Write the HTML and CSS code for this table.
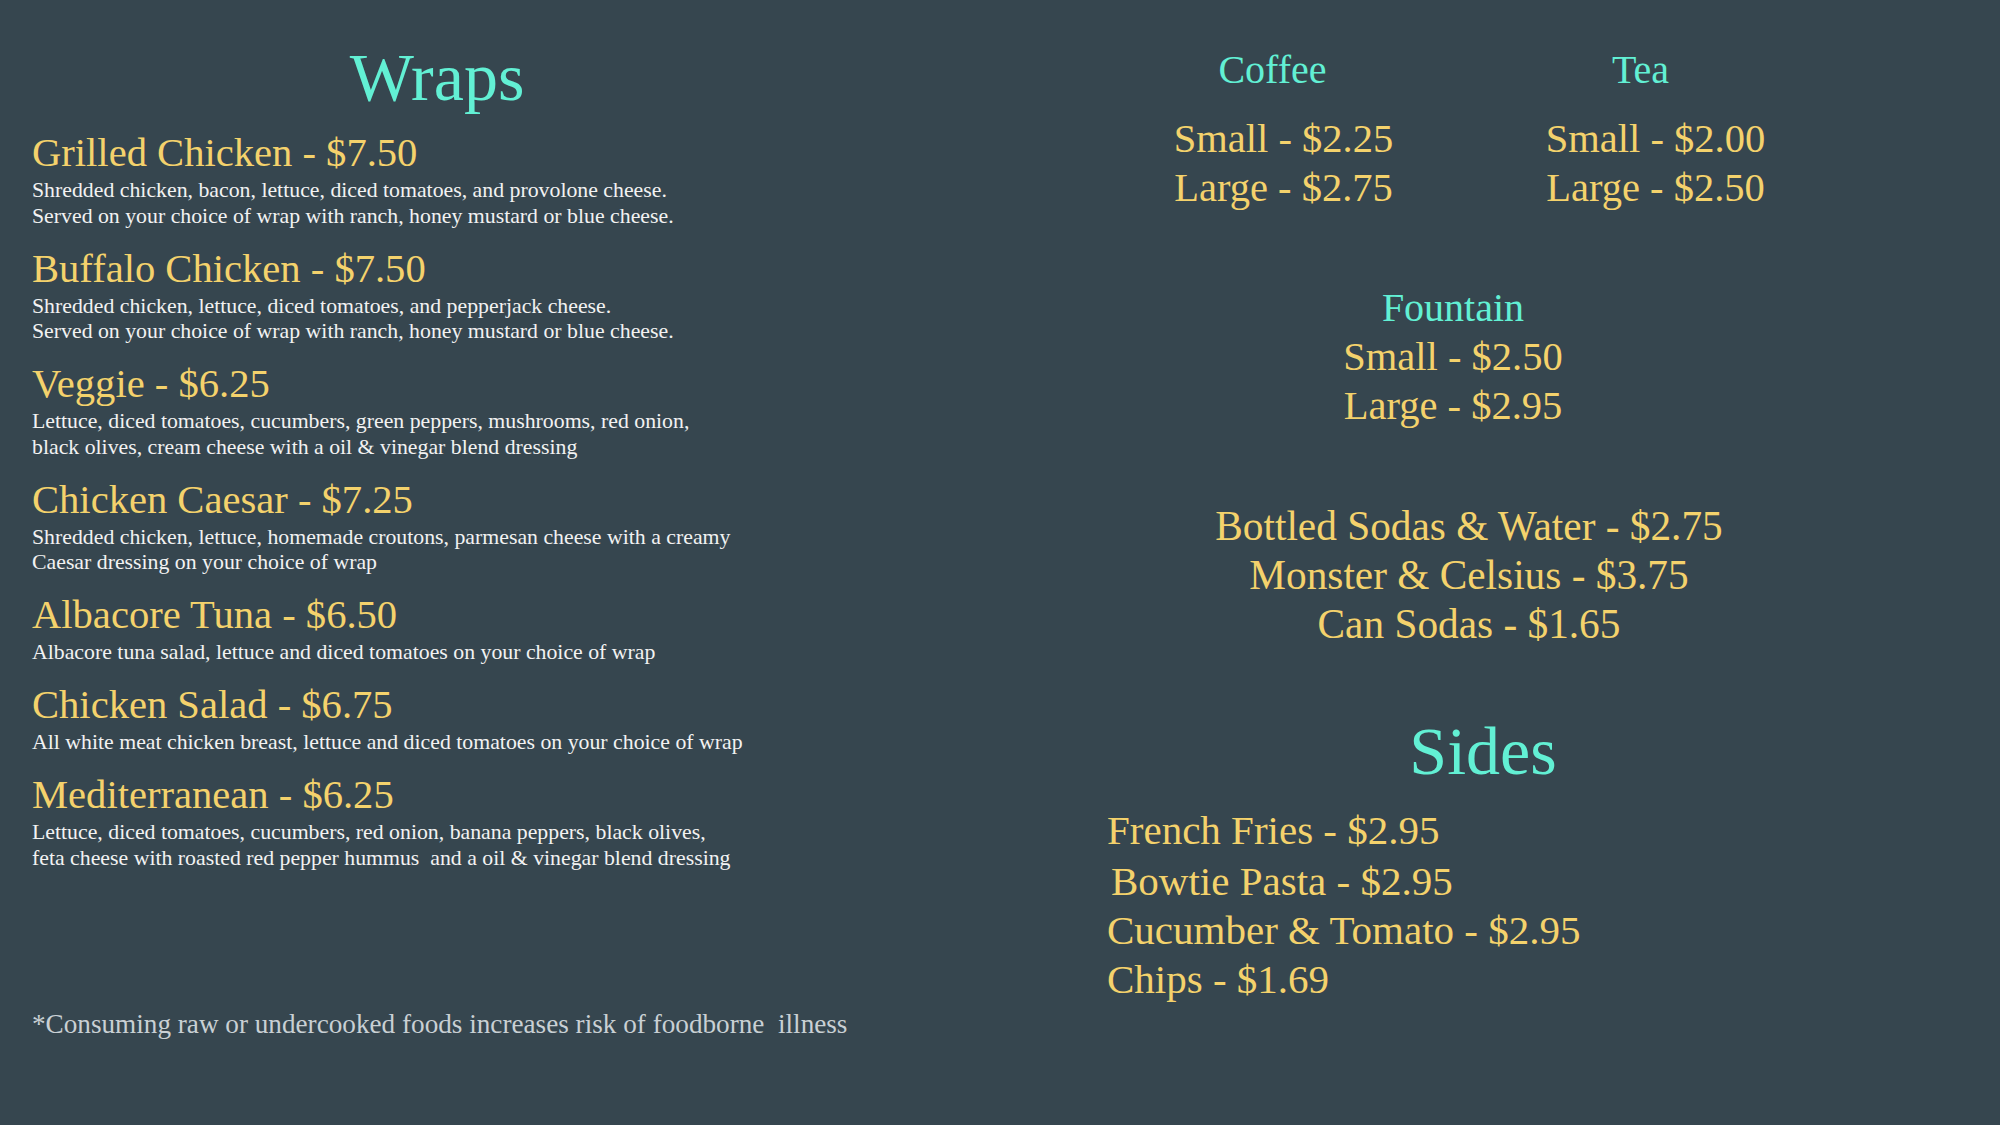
FILE: index.html
```html
<!DOCTYPE html>
<html lang="en">
<head>
<meta charset="utf-8">
<title>Menu</title>
<link rel="stylesheet" href="styles.css">
</head>
<body>
<main class="board">
  <section class="wraps">
    <h1 class="title">Wraps</h1>
    <div class="items">
      <article class="item">
        <h2 class="item-name">Grilled Chicken - $7.50</h2>
        <p class="item-desc">Shredded chicken, bacon, lettuce, diced tomatoes, and provolone cheese.<br>Served on your choice of wrap with ranch, honey mustard or blue cheese.</p>
      </article>
      <article class="item">
        <h2 class="item-name">Buffalo Chicken - $7.50</h2>
        <p class="item-desc">Shredded chicken, lettuce, diced tomatoes, and pepperjack cheese.<br>Served on your choice of wrap with ranch, honey mustard or blue cheese.</p>
      </article>
      <article class="item">
        <h2 class="item-name">Veggie - $6.25</h2>
        <p class="item-desc">Lettuce, diced tomatoes, cucumbers, green peppers, mushrooms, red onion,<br>black olives, cream cheese with a oil &amp; vinegar blend dressing</p>
      </article>
      <article class="item">
        <h2 class="item-name">Chicken Caesar - $7.25</h2>
        <p class="item-desc">Shredded chicken, lettuce, homemade croutons, parmesan cheese with a creamy<br>Caesar dressing on your choice of wrap</p>
      </article>
      <article class="item">
        <h2 class="item-name">Albacore Tuna - $6.50</h2>
        <p class="item-desc">Albacore tuna salad, lettuce and diced tomatoes on your choice of wrap</p>
      </article>
      <article class="item">
        <h2 class="item-name">Chicken Salad - $6.75</h2>
        <p class="item-desc">All white meat chicken breast, lettuce and diced tomatoes on your choice of wrap</p>
      </article>
      <article class="item">
        <h2 class="item-name">Mediterranean - $6.25</h2>
        <p class="item-desc">Lettuce, diced tomatoes, cucumbers, red onion, banana peppers, black olives,<br>feta cheese with roasted red pepper hummus&nbsp; and a oil &amp; vinegar blend dressing</p>
      </article>
    </div>
    <p class="note">*Consuming raw or undercooked foods increases risk of foodborne&nbsp; illness</p>
  </section>

  <section class="drinks">
    <div class="hot">
      <div class="hot-col coffee">
        <h3 class="drink-head">Coffee</h3>
        <ul class="prices prices-hot">
          <li>Small - $2.25</li>
          <li>Large - $2.75</li>
        </ul>
      </div>
      <div class="hot-col tea">
        <h3 class="drink-head">Tea</h3>
        <ul class="prices prices-hot">
          <li>Small - $2.00</li>
          <li>Large - $2.50</li>
        </ul>
      </div>
    </div>

    <div class="fountain">
      <h3 class="drink-head">Fountain</h3>
      <ul class="prices">
        <li>Small - $2.50</li>
        <li>Large - $2.95</li>
      </ul>
    </div>

    <ul class="prices bottled">
      <li>Bottled Sodas &amp; Water - $2.75</li>
      <li>Monster &amp; Celsius - $3.75</li>
      <li>Can Sodas - $1.65</li>
    </ul>

    <h1 class="title sides-title">Sides</h1>
    <ul class="prices sides">
      <li>French Fries - $2.95</li>
      <li class="indent">Bowtie Pasta - $2.95</li>
      <li>Cucumber &amp; Tomato - $2.95</li>
      <li>Chips - $1.69</li>
    </ul>
  </section>
</main>
</body>
</html>
```

FILE: styles.css
```css
* { box-sizing: border-box; }

html, body {
  margin: 0;
  padding: 0;
}

body {
  width: 2000px;
  height: 1125px;
  background: #36464f;
  font-family: "Liberation Serif", "Times New Roman", serif;
  overflow: hidden;
}

.board {
  display: flex;
  align-items: flex-start;
  height: 1125px;
}

h1, h2, h3, p, ul { margin: 0; padding: 0; font-weight: normal; }
ul { list-style: none; }

.title {
  color: #62f0d4;
  font-size: 68px;
  line-height: 68px;
  text-align: center;
}

/* Left column */
.wraps {
  width: 842px;
  padding-left: 32px;
  padding-top: 43px;
  display: flex;
  flex-direction: column;
}

.items {
  display: flex;
  flex-direction: column;
  gap: 17.5px;
  margin-top: 20px;
}

.item-name {
  color: #f4d26c;
  font-size: 40.6px;
  line-height: 44px;
}

.item-desc {
  padding-top: 3px;
  color: #f2f2f2;
  font-size: 21.8px;
  line-height: 25.5px;
}

.note {
  margin-top: 137px;
  color: #c9d0d4;
  font-size: 27.2px;
  line-height: 32px;
  white-space: nowrap;
}

/* Right column */
.drinks {
  width: 750px;
  margin-left: 248px;
  padding-top: 48px;
  display: flex;
  flex-direction: column;
  color: #f4d26c;
}

.hot {
  display: grid;
  grid-template-columns: 1fr 1fr;
}

.hot-col {
  text-align: center;
}

.coffee .drink-head { padding-right: 10px; }
.coffee .prices-hot { padding-left: 12px; }
.tea .drink-head { padding-right: 24px; }
.tea .prices-hot { padding-left: 6px; }

.drink-head {
  color: #62f0d4;
  font-size: 40px;
  line-height: 44px;
  text-align: center;
}

.prices li {
  font-size: 40.5px;
  line-height: 49px;
}

.prices-hot {
  margin-top: 22px;
}

.fountain {
  margin-top: 74px;
  padding-right: 24px;
  text-align: center;
}

.fountain .prices {
  margin-top: 2px;
}

.bottled {
  margin-top: 72px;
  padding-left: 8px;
  text-align: center;
}

.bottled li {
  font-size: 41.3px;
}

.sides-title {
  margin-top: 68px;
  padding-left: 36px;
}

.sides {
  margin-top: 21px;
  padding-left: 17px;
}

.sides li {
  font-size: 41px;
}

.sides .indent {
  padding-left: 4px;
  padding-top: 2px;
}
```
